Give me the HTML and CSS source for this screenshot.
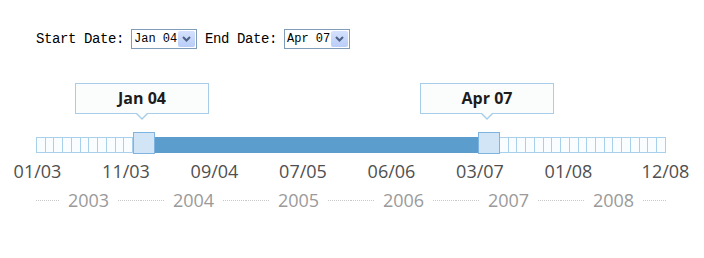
FILE: index.html
```html
<!DOCTYPE html>
<html lang="en">
<head>
    <meta charset="UTF-8">
    <title>Date Range Slider</title>
    <link rel="stylesheet" href="styles.css">
</head>
<body>
    <div class="page">
        <div class="controls">
            <label class="field-label">Start Date:</label>
            <div class="select">
                <span class="select-value">Jan 04</span>
                <span class="select-btn">
                    <svg width="9" height="6" viewBox="0 0 9 6"><path d="M1 1 L4.5 4.5 L8 1" fill="none" stroke="#4d6185" stroke-width="2"/></svg>
                </span>
            </div>
            <label class="field-label">End Date:</label>
            <div class="select">
                <span class="select-value">Apr 07</span>
                <span class="select-btn">
                    <svg width="9" height="6" viewBox="0 0 9 6"><path d="M1 1 L4.5 4.5 L8 1" fill="none" stroke="#4d6185" stroke-width="2"/></svg>
                </span>
            </div>
        </div>

        <div class="slider">
            <div class="tip" style="left: 39px">Jan 04</div>
            <div class="tip" style="left: 384px">Apr 07</div>
            <div class="track" id="track"></div>
            <div class="handle" style="left: 97px"></div>
            <div class="handle" style="left: 442px"></div>
        </div>

        <div class="months">
            <span>01/03</span>
            <span>11/03</span>
            <span>09/04</span>
            <span>07/05</span>
            <span>06/06</span>
            <span>03/07</span>
            <span>01/08</span>
            <span class="last">12/08</span>
        </div>

        <div class="years">
            <div class="year"><span>2003</span></div>
            <div class="year"><span>2004</span></div>
            <div class="year"><span>2005</span></div>
            <div class="year"><span>2006</span></div>
            <div class="year"><span>2007</span></div>
            <div class="year"><span>2008</span></div>
        </div>
    </div>

    <script>
        // one cell per month, Jan 2003 .. Dec 2008
        const track = document.getElementById('track');
        const start = 12, end = 51;
        for (let i = 0; i < 72; i++) {
            const cell = document.createElement('div');
            cell.className = 'cell';
            if (i > start && i < end) cell.classList.add('in-range');
            track.appendChild(cell);
        }
    </script>
</body>
</html>
```

FILE: styles.css
```css
body {
    margin: 0;
    background: #fff;
    font-family: "Open Sans", "Noto Sans", sans-serif;
}

.page {
    width: 630px;
    padding: 29px 0 0 36px;
}

.controls {
    display: flex;
    align-items: center;
    height: 20px;
}

.field-label {
    font-family: "Liberation Mono", monospace;
    font-size: 14px;
    letter-spacing: -0.4px;
    color: #000;
    margin-right: 7px;
}

.select {
    display: flex;
    align-items: center;
    width: 66px;
    height: 20px;
    box-sizing: border-box;
    border: 1px solid #7f9db9;
    background: #fff;
    padding: 1px;
    margin-right: 8px;
}

.select-value {
    flex: 1;
    font-family: "Liberation Mono", monospace;
    font-size: 12px;
    color: #000;
    padding-left: 1px;
    white-space: nowrap;
    overflow: hidden;
}

.select-btn {
    display: flex;
    align-items: center;
    justify-content: center;
    width: 17px;
    height: 16px;
    background: linear-gradient(#d5e1fd, #b9cdf8);
    border-radius: 2px;
}

.slider {
    position: relative;
    box-sizing: border-box;
    height: 71px;
    margin-top: 34px;
    padding-top: 54px;
}

.tip {
    position: absolute;
    top: 0;
    width: 134px;
    height: 31px;
    box-sizing: border-box;
    border: 1px solid #a7cde8;
    background: #fbfdfd;
    text-align: center;
    font-size: 16px;
    font-weight: 700;
    line-height: 29px;
    color: #1c1c1c;
}

.tip::before,
.tip::after {
    content: "";
    position: absolute;
    left: 50%;
    border-style: solid;
    border-color: transparent;
}

.tip::before {
    top: 30px;
    margin-left: -6px;
    border-width: 6px 6px 0;
    border-top-color: #a7cde8;
}

.tip::after {
    top: 29px;
    margin-left: -5px;
    border-width: 5px 5px 0;
    border-top-color: #fbfdfd;
}

.track {
    display: flex;
    height: 16px;
    border-right: 1px solid #a9d0ea;
}

.cell {
    flex: 1;
    box-sizing: border-box;
    border: 1px solid #a9d0ea;
    border-right: none;
    background: #fafdff;
}

.cell.in-range {
    background: #5b9dcd;
    border-color: #5b9dcd;
}

.handle {
    position: absolute;
    top: 49px;
    width: 22px;
    height: 22px;
    box-sizing: border-box;
    border: 1px solid #7fb4e1;
    background: #d1e5f7;
}

.months {
    display: flex;
    gap: 28.5px;
    width: 688px;
    margin: 5px 0 0 -28.5px;
    font-size: 18px;
    line-height: 24px;
    color: #4f4f4f;
}

.months span {
    width: 60px;
    text-align: center;
}

.months .last {
    margin-left: auto;
}

.years {
    display: flex;
    margin-top: 5px;
}

.year {
    flex: 1;
    display: flex;
    align-items: center;
    font-size: 18px;
    line-height: 24px;
    color: #9a9a9a;
}

.year::before,
.year::after {
    content: "";
    flex: 1;
    border-top: 1px dotted #c8c8c8;
}

.year span {
    padding: 0 9px;
}
```
